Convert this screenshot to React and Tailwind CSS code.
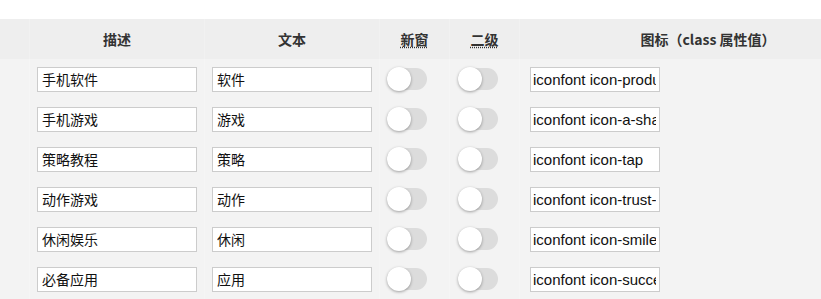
import React from 'react'

const rows = [
  { desc: '手机软件', text: '软件', icon: 'iconfont icon-product' },
  { desc: '手机游戏', text: '游戏', icon: 'iconfont icon-a-shapes' },
  { desc: '策略教程', text: '策略', icon: 'iconfont icon-tap' },
  { desc: '动作游戏', text: '动作', icon: 'iconfont icon-trust-fill' },
  { desc: '休闲娱乐', text: '休闲', icon: 'iconfont icon-smile' },
  { desc: '必备应用', text: '应用', icon: 'iconfont icon-success' },
]

const cjk = { fontFamily: '"Microsoft YaHei", "Noto Sans CJK SC", "Noto Sans", sans-serif' }

const Toggle = () => (
  <div className="relative h-[22px] w-[40px] rounded-full bg-[#dcdcdc]">
    <div className="absolute left-0 top-[-1px] h-[24px] w-[24px] rounded-full bg-white shadow-[0_1px_3px_rgba(0,0,0,0.35)]" />
  </div>
)

const TextInput = ({ value, className }) => (
  <input
    readOnly
    value={value}
    className={`h-[25px] border border-[#cccccc] bg-white px-[4px] text-[14px] text-[#111] outline-none ${className}`}
    style={cjk}
  />
)

export default function App() {
  return (
    <div className="h-[299px] w-[821px] overflow-hidden bg-white pt-[19px]" style={cjk}>
      <div className="w-[900px]">
        <div className="flex h-[40px] bg-[#eeeeee] text-[14px] font-bold text-[#333]">
          <div className="w-[30px] border-r border-[#f1f1f1]" />
          <div className="flex w-[175px] items-center justify-center border-r border-[#f1f1f1]">描述</div>
          <div className="flex w-[175px] items-center justify-center border-r border-[#f1f1f1]">文本</div>
          <div className="flex w-[70px] items-center justify-center border-r border-[#f1f1f1]">
            <span className="underline decoration-dotted underline-offset-[2px]">新窗</span>
          </div>
          <div className="flex w-[70px] items-center justify-center border-r border-[#f1f1f1]">
            <span className="underline decoration-dotted underline-offset-[2px]">二级</span>
          </div>
          <div className="flex w-[380px] items-center justify-center pr-[4px]">图标（class 属性值）</div>
        </div>
        {rows.map((r) => (
          <div key={r.desc} className="flex h-[40px] bg-[#f3f3f3]">
            <div className="w-[30px] border-r border-[#f5f5f5]" />
            <div className="flex w-[175px] items-center border-r border-[#f5f5f5] pl-[7px]">
              <TextInput value={r.desc} className="w-[160px]" />
            </div>
            <div className="flex w-[175px] items-center border-r border-[#f5f5f5] pl-[7px]">
              <TextInput value={r.text} className="w-[160px]" />
            </div>
            <div className="flex w-[70px] items-center border-r border-[#f5f5f5] pl-[7px]">
              <Toggle />
            </div>
            <div className="flex w-[70px] items-center border-r border-[#f5f5f5] pl-[8px]">
              <Toggle />
            </div>
            <div className="flex w-[380px] items-center pl-[10px]">
              <input
                readOnly
                value={r.icon}
                className="h-[25px] w-[130px] border border-[#cccccc] bg-white pl-[2px] pr-[3px] text-[15px] text-[#111] outline-none"
                style={{ fontFamily: '"Liberation Sans", Arial, sans-serif' }}
              />
            </div>
          </div>
        ))}
      </div>
    </div>
  )
}
